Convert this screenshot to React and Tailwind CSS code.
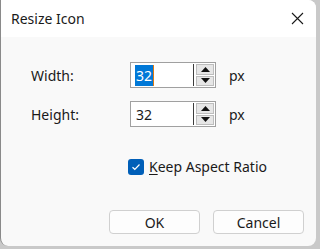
import React from "react";

function Spin({ value, selected }) {
  return (
    <div className="flex h-[26px] w-[86px] border border-[#a0a0a0] bg-white">
      <div className="relative flex flex-1 items-center pl-[4px] text-[14px] text-[#1a1a1a]">
        {selected ? (
          <span className="flex items-center">
            <span className="bg-[#0078d7] px-[1px] leading-[21px] text-white">{value}</span>
            <span className="h-[21px] w-[1px] bg-[#e07a10]"></span>
          </span>
        ) : (
          <span className="px-[1px]">{value}</span>
        )}
      </div>
      <div className="w-[1px] bg-[#3c3c3c] my-[1px]"></div>
      <div className="flex w-[21px] flex-col gap-[1px] p-[1px] pl-[2px]">
        <div className="flex flex-1 items-center justify-center border border-[#bdbdbd] bg-[#e6e6e6]">
          <svg width="9" height="5" viewBox="0 0 9 5"><path d="M4.5 0 L9 5 L0 5 Z" fill="#111" /></svg>
        </div>
        <div className="flex flex-1 items-center justify-center border border-[#bdbdbd] bg-[#e6e6e6]">
          <svg width="9" height="5" viewBox="0 0 9 5"><path d="M0 0 L9 0 L4.5 5 Z" fill="#111" /></svg>
        </div>
      </div>
    </div>
  );
}

export default function App() {
  return (
    <div
      className="h-[249px] w-[320px] overflow-hidden bg-[#c9c9c9]"
      style={{ fontFamily: '"Noto Sans", "Open Sans", sans-serif' }}
    >
      <div className="flex h-[246px] w-[316px] flex-col overflow-hidden rounded-b-[8px] rounded-tr-[8px] border-l border-[#8a8a8a] bg-[#f9f9f9]">
        <div className="flex h-[37px] items-center justify-between bg-white pl-[10px] pr-[12px]">
          <span className="text-[14px] text-[#1a1a1a]">Resize Icon</span>
          <svg width="13" height="13" viewBox="0 0 13 13">
            <path d="M1 1 L12 12 M12 1 L1 12" stroke="#1a1a1a" strokeWidth="1.1" />
          </svg>
        </div>
        <div className="flex flex-col pl-[30px] pt-[25px]">
          <div className="flex items-center">
            <span className="w-[99px] text-[14px] text-[#1a1a1a]">Width:</span>
            <Spin value="32" selected />
            <span className="ml-[13px] text-[14px] text-[#1a1a1a]">px</span>
          </div>
          <div className="mt-[13px] flex items-center">
            <span className="w-[99px] text-[14px] text-[#1a1a1a]">Height:</span>
            <Spin value="32" />
            <span className="ml-[13px] text-[14px] text-[#1a1a1a]">px</span>
          </div>
          <div className="mt-[29px] flex items-center pl-[97px]">
            <div className="flex h-[16px] w-[16px] items-center justify-center rounded-[3px] bg-[#005fb8]">
              <svg width="10" height="8" viewBox="0 0 10 8">
                <path d="M1.5 4.2 L3.8 6.3 L8.5 1.5" stroke="white" strokeWidth="1.2" fill="none" />
              </svg>
            </div>
            <span className="ml-[5px] text-[14px] text-[#1a1a1a]">
              <span className="underline underline-offset-2">K</span>eep Aspect Ratio
            </span>
          </div>
          <div className="mt-[33px] flex pl-[78px]">
            <button className="h-[24px] w-[91px] rounded-[4px] border border-[#d0d0d0] bg-[#fdfdfd] text-[14px] text-[#1a1a1a]">
              OK
            </button>
            <button className="ml-[13px] h-[24px] w-[91px] rounded-[4px] border border-[#d0d0d0] bg-[#fdfdfd] text-[14px] text-[#1a1a1a]">
              Cancel
            </button>
          </div>
        </div>
      </div>
    </div>
  );
}
